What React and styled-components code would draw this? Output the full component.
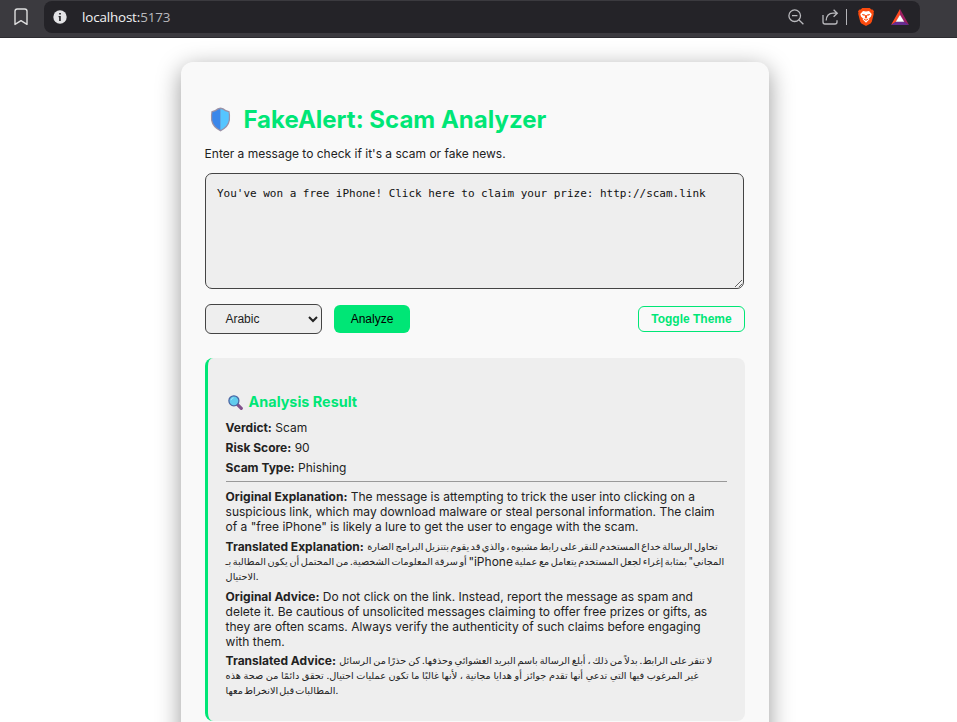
import React, { useState } from "react";
import styled, { createGlobalStyle } from "styled-components";

const GlobalStyle = createGlobalStyle`
  * { box-sizing: border-box; }
  html, body { margin: 0; height: 722px; overflow: hidden; background: #fff; }
  body { font-family: Inter, sans-serif; font-size: 12px; color: #222; }
`;

const Toolbar = styled.header`
  height: 38px;
  padding: 1px 37px 5px 13px;
  display: flex;
  align-items: center;
  gap: 15px;
  background: #3b3a3f;
  border-bottom: 1px solid #2c2b30;
`;
const AddressBar = styled.div`
  flex: 1;
  height: 32px;
  padding: 0 11px 0 9px;
  display: flex;
  align-items: center;
  background: #242328;
  border-radius: 8px;
`;
const Address = styled.div`
  flex: 1;
  margin-left: 15px;
  font: 13.4px/20px "Open Sans", sans-serif;
  letter-spacing: -0.15px;
  color: #f2f2f4;
`;
const Port = styled.span`
  color: #b9b9bd;
`;
const BarActions = styled.div`
  display: flex;
  align-items: center;
`;
const Divider = styled.span`
  width: 1px;
  height: 16px;
  margin: 0 11px 0 7px;
  background: #b5b5b9;
`;
const Icon = styled.svg`
  display: block;
  flex: none;
  width: ${(p) => p.$w}px;
  height: ${(p) => p.$h || p.$w}px;
  margin-left: ${(p) => p.$ml || 0}px;
`;

const Page = styled.main`
  height: 684px;
  padding-top: 24px;
  overflow: hidden;
  display: flex;
  justify-content: center;
  align-items: flex-start;
`;
const Card = styled.section`
  width: 588px;
  height: 800px;
  margin-right: 7px;
  padding: 42px 24px 0;
  background: #f9f9f9;
  border-radius: 12px;
  box-shadow: 0 6.4px 24px rgba(0, 0, 0, 0.4);
`;
const Title = styled.h1`
  display: flex;
  align-items: center;
  gap: 12.4px;
  margin: 0;
  height: 32px;
  padding-left: 5px;
  font-size: 24px;
  line-height: 32px;
  font-weight: 700;
  color: #00e676;

  svg { margin-top: -2px; }
`;
const Intro = styled.p`
  margin: 10px 0 11px -0.4px;
  line-height: 16px;
`;
const MessageBox = styled.textarea`
  display: block;
  width: 539px;
  height: 116px;
  padding: 12px 11px;
  border: 1px solid #444;
  border-radius: 7px;
  outline: none;
  background: #eee;
  color: #111;
  font: 11px/15px "DejaVu Sans Mono", monospace;
  letter-spacing: -0.02px;
`;
const Controls = styled.div`
  display: flex;
  align-items: center;
  margin-top: 15px;
  height: 30px;
`;
const LanguageSelect = styled.select`
  width: 117px;
  height: 30px;
  padding: 0 0 0 15.4px;
  border: 1px solid #444;
  border-radius: 6px;
  background: #eee;
  color: #222;
  font: 12px "Liberation Sans", sans-serif;
`;
const AnalyzeButton = styled.button`
  width: 76px;
  height: 28px;
  margin-left: 12px;
  padding: 0;
  border: 0;
  border-radius: 6px;
  background: #00e676;
  color: #000;
  font: 12px "Liberation Sans", sans-serif;
`;
const ThemeButton = styled.button`
  width: 107px;
  height: 26px;
  margin-left: auto;
  padding: 0;
  border: 1px solid #00e676;
  border-radius: 6px;
  background: transparent;
  color: #00e676;
  font: bold 12px "Liberation Sans", sans-serif;
`;
const Result = styled.article`
  height: 363px;
  margin-top: 24px;
  padding: 34px 18px 0 17.6px;
  background: #eee;
  border-left: 3px solid #00e676;
  border-radius: 8px;
`;
const ResultTitle = styled.h3`
  display: flex;
  align-items: center;
  gap: 6px;
  height: 20px;
  margin: 0 0 8px;
  padding-left: 2px;
  color: #00e676;
  font-size: 14.4px;
  line-height: 20px;
`;
const Field = styled.p`
  margin: 0 0 5px;
  line-height: 15px;
  white-space: nowrap;

  &:nth-last-child(2) { margin-bottom: 4px; }
`;
const Rule = styled.hr`
  margin: 6px 0 7px;
  border: 0;
  height: 1px;
  background: #999;
`;
const Line = styled.span`
  display: block;
  height: 15px;
`;
const Arabic = styled.span`
  font-family: Inter, "DejaVu Sans", sans-serif;
  font-size: 9.7px;
  line-height: 1;
  vertical-align: 1px;
  word-spacing: ${(p) => p.$space || 0}px;
`;
const Latin = styled.span`
  font-size: 12px;
  vertical-align: -1px;
`;

const Bookmark = () => (
  <Icon $w={16} $h={18} viewBox="0 0 16 18" fill="none" stroke="#dededf" strokeWidth="1.4">
    <path d="M2 3.3Q2 1 4.3 1h7.4Q14 1 14 3.3V16.4L8 12.6 2 16.4Z" strokeLinejoin="round" />
  </Icon>
);
const Info = () => (
  <Icon $w={14} viewBox="0 0 14 14">
    <circle cx="7" cy="7" r="6.7" fill="#e3e3e6" />
    <path d="M6.1 3h1.8v1.6H6.1zM5.6 6h2.2v5H6.1V7.2h-.5z" fill="#29282d" />
  </Icon>
);
const ZoomOut = () => (
  <Icon $w={16} viewBox="0 0 16 16" fill="none" stroke="#b9b9bd" strokeWidth="1.3">
    <circle cx="6.7" cy="6.7" r="5.8" />
    <path d="M4 6.7h5.4M11 11l4.4 4.2" />
  </Icon>
);
const Share = () => (
  <Icon $w={17} $h={16} $ml={18} viewBox="0 0 17 16" fill="none" stroke="#b9b9bd" strokeWidth="1.3">
    <path d="M1 6v7Q1 15 3 15h10q2 0 2-2v-1.7M4.2 11.5Q4.7 4.2 11 4.2h4M11.6.7l3.7 3.5-3.7 3.6" />
  </Icon>
);
const Brave = () => (
  <Icon $w={16} $h={18} viewBox="0 0 16 18">
    <path d="M4.2 0h7.6l1.4 1.6 1.3-.2L16 3.3l-.5 1.5.3 1-2 8-1.2 1.6L8 18l-4.6-2.6-1.2-1.6-2-8 .3-1L0 3.3l1.5-1.9 1.3.2Z" fill="#fb4b0e" />
    <path d="M5 3 8 3.5 11 3l2.7 3-.7 2.5-2 2 .3 1L8 14.8l-3.3-3.3.3-1-2-2L2.3 6Z" fill="#fff" />
    <path d="m4 6 3 .5-.5 1.4L4.3 7ZM12 6l-3 .5.5 1.4L11.7 7ZM7.2 7h1.6l.4 2.6L8 10.7 6.8 9.6ZM5.5 10.2 8 11.7l2.5-1.5-.6 1.6L8 12.8l-1.9-1Z" fill="#fb4b0e" />
  </Icon>
);
const Rewards = () => (
  <Icon $w={18} $h={16} $ml={17} viewBox="0 0 18 16">
    <path d="M9 0v6l-4 7-5 3Z" fill="#ff4a23" />
    <path d="m9 0 9 16-5-3-4-7Z" fill="#9e1f63" />
    <path d="M0 16 5 12.5h8l5 3.5Z" fill="#662d91" />
    <path d="m9 5.8 4.2 7H4.8Z" fill="#fff" />
  </Icon>
);
const Shield = () => (
  <Icon $w={21} $h={25} viewBox="0 0 21 25">
    <path d="M10.5.6Q7.5 1 5 3L1.4 4.2Q.6 8 1 13.3 2.4 20.8 10.5 24.4 18.6 20.8 20 13.3 20.4 8 19.6 4.2L16 3Q13.5 1 10.5.6Z" fill="#9a91a7" />
    <path d="M10.5 1.9Q8 2.3 5.6 4.2L2.4 5.2Q1.9 9 2.3 13.2 3.6 19.6 10.5 23Z" fill="#3b87ea" />
    <path d="M10.5 1.9q2.5.4 4.9 2.3l3.2 1q.5 3.8.1 8-1.3 6.4-8.2 9.8Z" fill="#55c5ff" />
  </Icon>
);
const Magnifier = () => (
  <Icon $w={15} viewBox="0 0 15 15">
    <path d="m9.3 9.3 4 4" stroke="#81508b" strokeWidth="3.2" strokeLinecap="round" />
    <circle cx="5.9" cy="5.8" r="5" fill="#61cbed" stroke="#4c67a4" strokeWidth="1.3" />
    <path d="M3 5.2Q3.4 3 5.6 2.8" stroke="#9be7f9" fill="none" />
  </Icon>
);

export default function App() {
  const [message, setMessage] = useState("You've won a free iPhone! Click here to claim your prize: http://scam.link");
  return (
    <>
      <GlobalStyle />
      <Toolbar>
        <Bookmark />
        <AddressBar>
          <Info />
          <Address>localhost:<Port>5173</Port></Address>
          <BarActions>
            <ZoomOut />
            <Share />
            <Divider />
            <Brave />
            <Rewards />
          </BarActions>
        </AddressBar>
      </Toolbar>
      <Page>
        <Card>
          <Title><Shield />FakeAlert: Scam Analyzer</Title>
          <Intro>Enter a message to check if it's a scam or fake news.</Intro>
          <MessageBox value={message} spellCheck={false} onChange={(e) => setMessage(e.target.value)} />
          <Controls>
            <LanguageSelect defaultValue="Arabic"><option>Arabic</option></LanguageSelect>
            <AnalyzeButton>Analyze</AnalyzeButton>
            <ThemeButton>Toggle Theme</ThemeButton>
          </Controls>
          <Result>
            <ResultTitle><Magnifier />Analysis Result</ResultTitle>
            <Field><b>Verdict:</b> Scam</Field>
            <Field><b>Risk Score:</b> 90</Field>
            <Field><b>Scam Type:</b> Phishing</Field>
            <Rule />
            <Field>
              <Line><b>Original Explanation:</b> The message is attempting to trick the user into clicking on a</Line>
              <Line>suspicious link, which may download malware or steal personal information. The claim</Line>
              <Line>of a "free iPhone" is likely a lure to get the user to engage with the scam.</Line>
            </Field>
            <Field>
              <Line><b>Translated Explanation:</b> <Arabic $space={-1.2}>تحاول الرسالة خداع المستخدم للنقر على رابط مشبوه ، والذي قد يقوم بتنزيل البرامج الضارة</Arabic></Line>
              <Line><Arabic $space={-1.1}>أو سرقة المعلومات الشخصية. من المحتمل أن يكون المطالبة بـ <Latin>"iPhone</Latin> المجاني" بمثابة إغراء لجعل المستخدم يتعامل مع عملية</Arabic></Line>
              <Line><Arabic>الاحتيال.</Arabic></Line>
            </Field>
            <Field>
              <Line><b>Original Advice:</b> Do not click on the link. Instead, report the message as spam and</Line>
              <Line>delete it. Be cautious of unsolicited messages claiming to offer free prizes or gifts, as</Line>
              <Line>they are often scams. Always verify the authenticity of such claims before engaging</Line>
              <Line>with them.</Line>
            </Field>
            <Field>
              <Line><b>Translated Advice:</b> <Arabic $space={-0.8}>لا تنقر على الرابط. بدلاً من ذلك ، أبلغ الرسالة باسم البريد العشوائي وحذفها. كن حذرًا من الرسائل</Arabic></Line>
              <Line><Arabic $space={-0.1}>غير المرغوب فيها التي تدعي أنها تقدم جوائز أو هدايا مجانية ، لأنها غالبًا ما تكون عمليات احتيال. تحقق دائمًا من صحة هذه</Arabic></Line>
              <Line><Arabic $space={-1.6}>المطالبات قبل الانخراط معها.</Arabic></Line>
            </Field>
          </Result>
        </Card>
      </Page>
    </>
  );
}
